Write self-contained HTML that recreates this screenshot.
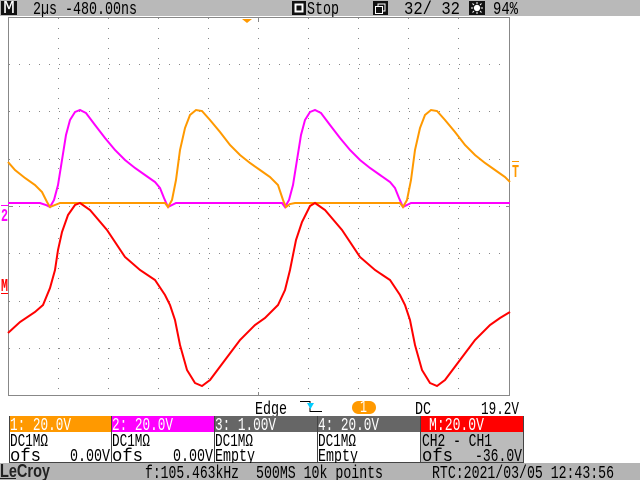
<!DOCTYPE html>
<html><head><meta charset="utf-8"><style>
html,body{margin:0;padding:0;background:#fff;}
svg{display:block;}
text{font-family:"Liberation Mono","DejaVu Sans Mono",monospace;font-size:18px;}
</style></head><body>
<svg width="640" height="480" viewBox="0 0 640 480" xmlns="http://www.w3.org/2000/svg">
<rect x="0" y="0" width="640" height="480" fill="#fff"/>
<!-- top bar -->
<rect x="0" y="0" width="640" height="16" fill="#b9b9b9"/>
<rect x="1" y="1" width="16" height="14" fill="#111"/>
<text x="3" y="13" fill="#fff" font-size="15" textLength="12" lengthAdjust="spacingAndGlyphs">M</text>
<text x="33" y="14" fill="#000" textLength="104" lengthAdjust="spacingAndGlyphs">2µs -480.00ns</text>
<rect x="292" y="1" width="14" height="14" fill="#111"/>
<rect x="294.5" y="3.5" width="9" height="9" fill="#fff"/>
<rect x="296.5" y="5.5" width="5" height="5" fill="#111"/>
<text x="307" y="14" fill="#000" textLength="32" lengthAdjust="spacingAndGlyphs">Stop</text>
<rect x="373" y="1" width="15" height="14" fill="#111"/>
<rect x="375.5" y="6.5" width="7" height="7" fill="none" stroke="#fff" stroke-width="1"/>
<path d="M378 6V4h7v7h-2" fill="none" stroke="#fff" stroke-width="1"/>
<text x="404" y="14" fill="#000" textLength="56" lengthAdjust="spacingAndGlyphs">32/ 32</text>
<rect x="469" y="1" width="16" height="14" fill="#111"/>
<circle cx="477" cy="8" r="3.2" fill="#fff"/>
<path d="M477 2v2M477 12v2M471 8h2M481 8h2M472.5 3.5l1.5 1.5M481.5 3.5l-1.5 1.5M472.5 12.5l1.5-1.5M481.5 12.5l-1.5-1.5" stroke="#fff" stroke-width="1"/>
<text x="493" y="14" fill="#000" textLength="25" lengthAdjust="spacingAndGlyphs">94%</text>
<!-- grid -->
<rect x="8.5" y="17.5" width="501" height="378" fill="none" stroke="#888" stroke-width="1"/>
<g stroke="#888" stroke-width="1" stroke-dasharray="1 9">
<path d="M58.5 18V396M108.5 18V396M158.5 18V396M208.5 18V396M258.5 18V396M308.5 18V396M358.5 18V396M408.5 18V396M458.5 18V396"/>
<path d="M9 64.5H510M9 111.5H510M9 159.5H510M9 206.5H510M9 253.5H510M9 301.5H510M9 348.5H510"/>
</g>
<path d="M258.5 18v4M258.5 392v4M9 206.5h4M506 206.5h4" stroke="#888"/>
<path d="M242 19h10l-5 4z" fill="#f90"/>
<!-- waveforms -->
<polyline fill="none" stroke="#f0f" stroke-width="2" points="8,203 40,203 46,205 50,207 54,200 58,185 62,160 66,135 70,120 75,112 80,110 86,113 95,125 105,138 115,150 125,160 135,168 145,175 155,182 160,188 164,198 168,207 172,205 176,203 282,203 285,207 289,200 293,185 297,160 301,135 305,120 310,112 315,110 321,113 330,125 340,138 350,150 360,160 370,168 380,175 390,182 395,188 399,198 403,207 407,205 411,203 510,203"/>
<polyline fill="none" stroke="#f90" stroke-width="2" points="8,162 15,170 25,178 35,185 42,192 47,202 50,207 55,205 60,203 165,203 168,207 172,200 176,180 180,150 185,128 190,115 196,110 202,111 210,120 220,132 230,145 240,155 250,163 260,170 270,177 278,185 283,200 286,207 290,204 295,203 400,203 403,207 407,200 411,180 415,150 420,128 425,115 431,110 437,111 445,120 455,132 465,145 475,155 485,163 495,170 505,177 510,182"/>
<polyline fill="none" stroke="#f00" stroke-width="2" points="8,333 20,322 35,312 43,305 50,288 55,270 58,250 62,232 68,215 75,205 80,203 90,210 107,230 125,257 140,270 155,280 165,295 170,305 175,320 180,345 187,370 195,383 202,386 210,380 225,360 240,340 255,325 265,318 278,305 285,290 290,270 296,240 302,222 310,206 315,203 325,210 342,230 360,257 375,270 390,280 400,295 405,305 410,320 415,345 422,370 430,383 437,386 445,380 460,360 475,340 490,325 500,318 510,312"/>
<!-- markers -->
<path d="M1 205.5h7" stroke="#f0f"/>
<text x="1" y="221" fill="#f0f" font-weight="bold" font-size="16" textLength="7" lengthAdjust="spacingAndGlyphs">2</text>
<text x="1" y="291" fill="#f00" font-weight="bold" font-size="16" textLength="7" lengthAdjust="spacingAndGlyphs">M</text>
<path d="M1 293.5h7" stroke="#f00"/>
<path d="M512 161.5h7" stroke="#f90"/>
<text x="512" y="177" fill="#f90" font-weight="bold" font-size="16" textLength="7" lengthAdjust="spacingAndGlyphs">T</text>
<!-- trigger row -->
<text x="255" y="414" fill="#000" textLength="32" lengthAdjust="spacingAndGlyphs">Edge</text>
<path d="M300 401.5h10v10h12" fill="none" stroke="#000"/>
<path d="M307 403h7l-3.5 6z" fill="#0cf"/>
<path d="M310.5 403v6" stroke="#0cf"/>
<rect x="352" y="401" width="24" height="13" rx="6.5" fill="#f90"/>
<text x="360" y="412" fill="#fff" font-size="14" textLength="7" lengthAdjust="spacingAndGlyphs">1</text>
<text x="415" y="414" fill="#000" textLength="16" lengthAdjust="spacingAndGlyphs">DC</text>
<text x="481" y="414" fill="#000" textLength="38" lengthAdjust="spacingAndGlyphs">19.2V</text>
<!-- channel panels -->
<rect x="9" y="416" width="102" height="16" fill="#f90"/>
<rect x="111" y="416" width="103" height="16" fill="#f0f"/>
<rect x="214" y="416" width="103" height="16" fill="#666"/>
<rect x="317" y="416" width="103" height="16" fill="#666"/>
<rect x="420" y="416" width="103" height="16" fill="#f00"/>
<rect x="420" y="432" width="103" height="31" fill="#bbb"/>
<g stroke="#444" stroke-width="1" fill="none">
<path d="M9.5 416v47M111.5 416v47M214.5 416v47M317.5 416v47M420.5 416v47M523.5 416v47M9 462.5h515"/>
</g>
<g fill="#fff">
<text x="10" y="430" textLength="61" lengthAdjust="spacingAndGlyphs">1: 20.0V</text>
<text x="112" y="430" textLength="61" lengthAdjust="spacingAndGlyphs">2: 20.0V</text>
<text x="215" y="430" textLength="61" lengthAdjust="spacingAndGlyphs">3: 1.00V</text>
<text x="318" y="430" textLength="61" lengthAdjust="spacingAndGlyphs">4: 20.0V</text>
<text x="429" y="430" textLength="55" lengthAdjust="spacingAndGlyphs">M:20.0V</text>
</g>
<g fill="#000">
<text x="10" y="446" textLength="38" lengthAdjust="spacingAndGlyphs">DC1MΩ</text>
<text x="112" y="446" textLength="38" lengthAdjust="spacingAndGlyphs">DC1MΩ</text>
<text x="215" y="446" textLength="38" lengthAdjust="spacingAndGlyphs">DC1MΩ</text>
<text x="318" y="446" textLength="38" lengthAdjust="spacingAndGlyphs">DC1MΩ</text>
<text x="422" y="446" textLength="70" lengthAdjust="spacingAndGlyphs">CH2 - CH1</text>
<text x="10" y="461" textLength="31" lengthAdjust="spacingAndGlyphs">ofs</text>
<text x="70" y="461" textLength="40" lengthAdjust="spacingAndGlyphs">0.00V</text>
<text x="112" y="461" textLength="31" lengthAdjust="spacingAndGlyphs">ofs</text>
<text x="173" y="461" textLength="40" lengthAdjust="spacingAndGlyphs">0.00V</text>
<text x="215" y="461" textLength="40" lengthAdjust="spacingAndGlyphs">Empty</text>
<text x="318" y="461" textLength="40" lengthAdjust="spacingAndGlyphs">Empty</text>
<text x="422" y="461" textLength="31" lengthAdjust="spacingAndGlyphs">ofs</text>
<text x="475" y="461" textLength="47" lengthAdjust="spacingAndGlyphs">-36.0V</text>
</g>
<!-- bottom bar -->
<rect x="0" y="463" width="640" height="17" fill="#b4b4b4"/>
<text x="0" y="477" fill="#222" font-weight="bold" font-size="16" textLength="50" lengthAdjust="spacingAndGlyphs" style="font-family:'Liberation Sans',sans-serif">LeCroy</text>
<path d="M0 478.5h16" stroke="#222"/>
<text x="145" y="478" fill="#000" textLength="94" lengthAdjust="spacingAndGlyphs">f:105.463kHz</text>
<text x="256" y="478" fill="#000" textLength="127" lengthAdjust="spacingAndGlyphs">500MS 10k points</text>
<text x="432" y="478" fill="#000" textLength="182" lengthAdjust="spacingAndGlyphs">RTC:2021/03/05 12:43:56</text>
</svg>
</body></html>
